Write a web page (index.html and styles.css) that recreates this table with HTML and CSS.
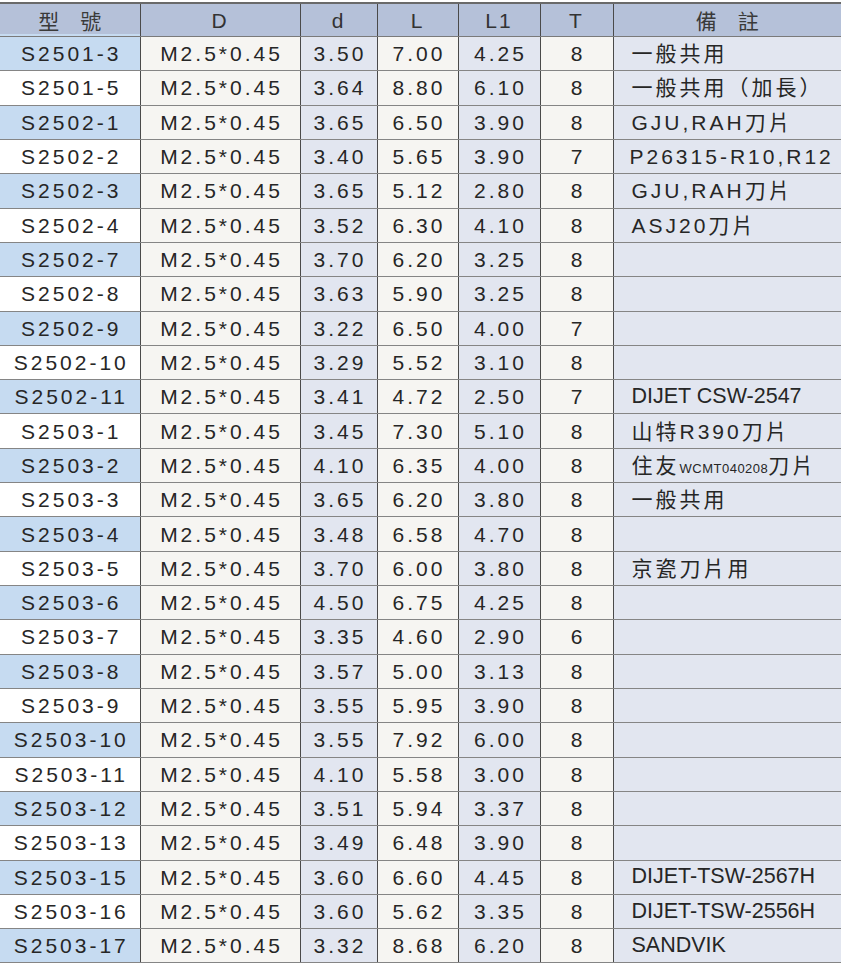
FILE: index.html
```html
<!DOCTYPE html>
<html lang="zh-Hant">
<head>
<meta charset="utf-8">
<title>型號表</title>
<link rel="stylesheet" href="styles.css">
</head>
<body>
<table class="spec">
  <colgroup>
    <col class="c-model"><col class="c-d1"><col class="c-d2"><col class="c-l"><col class="c-l1"><col class="c-t"><col class="c-note">
  </colgroup>
  <thead>
    <tr>
      <th class="model">型　號</th><th>D</th><th>d</th><th>L</th><th>L1</th><th>T</th><th class="note-h">備　註</th>
    </tr>
  </thead>
  <tbody>
    <tr><td class="model">S2501-3</td><td class="w">M2.5*0.45</td><td class="b">3.50</td><td class="w">7.00</td><td class="b">4.25</td><td class="w">8</td><td class="note">一般共用</td></tr>
    <tr><td class="model">S2501-5</td><td class="w">M2.5*0.45</td><td class="b">3.64</td><td class="w">8.80</td><td class="b">6.10</td><td class="w">8</td><td class="note">一般共用（加長）</td></tr>
    <tr><td class="model">S2502-1</td><td class="w">M2.5*0.45</td><td class="b">3.65</td><td class="w">6.50</td><td class="b">3.90</td><td class="w">8</td><td class="note">GJU,RAH刀片</td></tr>
    <tr><td class="model">S2502-2</td><td class="w">M2.5*0.45</td><td class="b">3.40</td><td class="w">5.65</td><td class="b">3.90</td><td class="w">7</td><td class="note tight">P26315-R10,R12</td></tr>
    <tr><td class="model">S2502-3</td><td class="w">M2.5*0.45</td><td class="b">3.65</td><td class="w">5.12</td><td class="b">2.80</td><td class="w">8</td><td class="note">GJU,RAH刀片</td></tr>
    <tr><td class="model">S2502-4</td><td class="w">M2.5*0.45</td><td class="b">3.52</td><td class="w">6.30</td><td class="b">4.10</td><td class="w">8</td><td class="note">ASJ20刀片</td></tr>
    <tr><td class="model">S2502-7</td><td class="w">M2.5*0.45</td><td class="b">3.70</td><td class="w">6.20</td><td class="b">3.25</td><td class="w">8</td><td class="note"></td></tr>
    <tr><td class="model">S2502-8</td><td class="w">M2.5*0.45</td><td class="b">3.63</td><td class="w">5.90</td><td class="b">3.25</td><td class="w">8</td><td class="note"></td></tr>
    <tr><td class="model">S2502-9</td><td class="w">M2.5*0.45</td><td class="b">3.22</td><td class="w">6.50</td><td class="b">4.00</td><td class="w">7</td><td class="note"></td></tr>
    <tr><td class="model">S2502-10</td><td class="w">M2.5*0.45</td><td class="b">3.29</td><td class="w">5.52</td><td class="b">3.10</td><td class="w">8</td><td class="note"></td></tr>
    <tr><td class="model">S2502-11</td><td class="w">M2.5*0.45</td><td class="b">3.41</td><td class="w">4.72</td><td class="b">2.50</td><td class="w">7</td><td class="note plain">DIJET CSW-2547</td></tr>
    <tr><td class="model">S2503-1</td><td class="w">M2.5*0.45</td><td class="b">3.45</td><td class="w">7.30</td><td class="b">5.10</td><td class="w">8</td><td class="note">山特R390刀片</td></tr>
    <tr><td class="model">S2503-2</td><td class="w">M2.5*0.45</td><td class="b">4.10</td><td class="w">6.35</td><td class="b">4.00</td><td class="w">8</td><td class="note">住友<span class="small">WCMT040208</span>刀片</td></tr>
    <tr><td class="model">S2503-3</td><td class="w">M2.5*0.45</td><td class="b">3.65</td><td class="w">6.20</td><td class="b">3.80</td><td class="w">8</td><td class="note">一般共用</td></tr>
    <tr><td class="model">S2503-4</td><td class="w">M2.5*0.45</td><td class="b">3.48</td><td class="w">6.58</td><td class="b">4.70</td><td class="w">8</td><td class="note"></td></tr>
    <tr><td class="model">S2503-5</td><td class="w">M2.5*0.45</td><td class="b">3.70</td><td class="w">6.00</td><td class="b">3.80</td><td class="w">8</td><td class="note">京瓷刀片用</td></tr>
    <tr><td class="model">S2503-6</td><td class="w">M2.5*0.45</td><td class="b">4.50</td><td class="w">6.75</td><td class="b">4.25</td><td class="w">8</td><td class="note"></td></tr>
    <tr><td class="model">S2503-7</td><td class="w">M2.5*0.45</td><td class="b">3.35</td><td class="w">4.60</td><td class="b">2.90</td><td class="w">6</td><td class="note"></td></tr>
    <tr><td class="model">S2503-8</td><td class="w">M2.5*0.45</td><td class="b">3.57</td><td class="w">5.00</td><td class="b">3.13</td><td class="w">8</td><td class="note"></td></tr>
    <tr><td class="model">S2503-9</td><td class="w">M2.5*0.45</td><td class="b">3.55</td><td class="w">5.95</td><td class="b">3.90</td><td class="w">8</td><td class="note"></td></tr>
    <tr><td class="model">S2503-10</td><td class="w">M2.5*0.45</td><td class="b">3.55</td><td class="w">7.92</td><td class="b">6.00</td><td class="w">8</td><td class="note"></td></tr>
    <tr><td class="model">S2503-11</td><td class="w">M2.5*0.45</td><td class="b">4.10</td><td class="w">5.58</td><td class="b">3.00</td><td class="w">8</td><td class="note"></td></tr>
    <tr><td class="model">S2503-12</td><td class="w">M2.5*0.45</td><td class="b">3.51</td><td class="w">5.94</td><td class="b">3.37</td><td class="w">8</td><td class="note"></td></tr>
    <tr><td class="model">S2503-13</td><td class="w">M2.5*0.45</td><td class="b">3.49</td><td class="w">6.48</td><td class="b">3.90</td><td class="w">8</td><td class="note"></td></tr>
    <tr><td class="model">S2503-15</td><td class="w">M2.5*0.45</td><td class="b">3.60</td><td class="w">6.60</td><td class="b">4.45</td><td class="w">8</td><td class="note plain">DIJET-TSW-2567H</td></tr>
    <tr><td class="model">S2503-16</td><td class="w">M2.5*0.45</td><td class="b">3.60</td><td class="w">5.62</td><td class="b">3.35</td><td class="w">8</td><td class="note plain">DIJET-TSW-2556H</td></tr>
    <tr><td class="model">S2503-17</td><td class="w">M2.5*0.45</td><td class="b">3.32</td><td class="w">8.68</td><td class="b">6.20</td><td class="w">8</td><td class="note plain">SANDVIK</td></tr>
  </tbody>
</table>
</body>
</html>
```
FILE: styles.css
```css
html, body {
  margin: 0;
  padding: 0;
  background: #ffffff;
}
body {
  padding-top: 2px;
}
.spec {
  border-collapse: collapse;
  table-layout: fixed;
  width: 841px;
  font-family: "Liberation Sans", Arial, "Noto Sans CJK TC", sans-serif;
  color: #262626;
}
.c-model { width: 140px; }
.c-d1 { width: 160px; }
.c-d2 { width: 77px; }
.c-l { width: 81px; }
.c-l1 { width: 82px; }
.c-t { width: 73px; }
.c-note { width: 228px; }

.spec th {
  height: 32px;
  background: #b5c1d9;
  font-weight: normal;
  font-size: 21px;
  letter-spacing: 2px;
  text-align: center;
  vertical-align: middle;
  border-top: 2px solid #6a6a6a;
  border-bottom: 1px solid #7a7a7a;
  border-left: 1px solid #4a4a4a;
  padding: 0;
  line-height: 1;
  font-family: "Liberation Sans", Arial, "Noto Sans CJK TC", sans-serif;
  color: #333;
}
.spec th:first-child { border-left: none; }
.spec th.model, .spec th.note-h {
  font-family: "Noto Sans CJK TC", sans-serif;
  font-size: 21px;
  letter-spacing: 0;
  color: #3a3a3a;
}
.spec th.model {
  box-shadow: inset 0 -2px 0 #c6dbf1;
}

.spec td {
  height: 33.32px;
  padding: 0;
  font-size: 21px;
  letter-spacing: 3px;
  text-align: center;
  vertical-align: middle;
  white-space: nowrap;
  border-bottom: 1px solid #858585;
  border-left: 1px solid #4a4a4a;
  line-height: 1;
}
.spec td:first-child { border-left: none; }
.spec td.model {
  background: #ffffff;
  padding-left: 3px;
}
.spec tbody tr:nth-child(odd) td.model {
  background: #c6dbf1;
}
.spec td.w { background: #f6f5f2; padding-left: 3px; }
.spec td.b { background: #e2e6f0; padding-left: 3px; }
.spec td.note {
  background: #e2e6f0;
  text-align: left;
  padding-left: 18px;
  font-family: "Liberation Sans", Arial, "Noto Sans CJK TC", sans-serif;
  letter-spacing: 3px;
}
.spec td.note.tight { letter-spacing: 3px; padding-left: 16px; }
.spec td.note.plain {
  letter-spacing: 0;
  font-size: 21.5px;
}
.spec td.note .small {
  font-size: 13px;
  letter-spacing: 0.5px;
}
```
